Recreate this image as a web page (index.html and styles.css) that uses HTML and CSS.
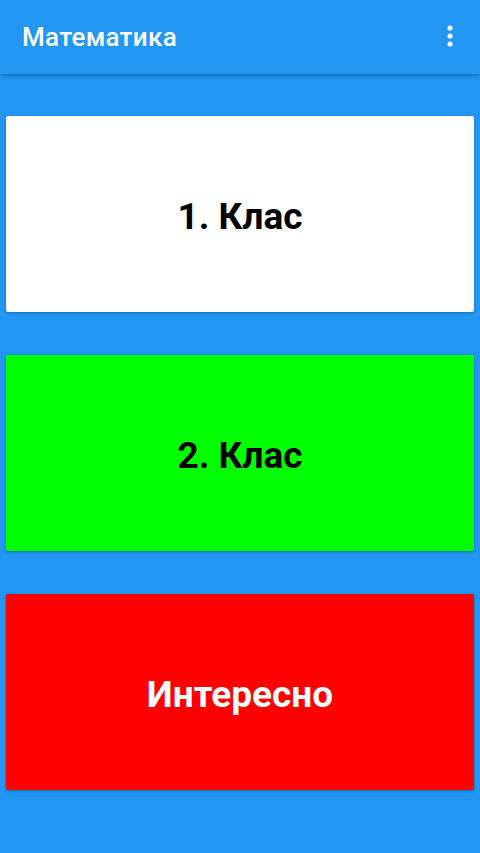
FILE: index.html
```html
<!DOCTYPE html>
<html lang="uk">
<head>
<meta charset="utf-8">
<title>Математика</title>
<link rel="stylesheet" href="styles.css">
</head>
<body>
<header class="toolbar">
  <h1 class="title">Математика</h1>
  <button class="menu" aria-label="Меню">
    <svg width="8" height="24" viewBox="0 0 8 24"><circle cx="4" cy="4" r="2.6" fill="#fff"/><circle cx="4" cy="12" r="2.6" fill="#fff"/><circle cx="4" cy="20" r="2.6" fill="#fff"/></svg>
  </button>
</header>
<main class="content">
  <div class="card card-white">1. Клас</div>
  <div class="card card-green">2. Клас</div>
  <div class="card card-red">Интересно</div>
</main>
</body>
</html>
```
FILE: styles.css
```css
* { box-sizing: border-box; }
html, body { margin: 0; padding: 0; }
body {
  width: 480px;
  height: 853px;
  background: #2196f3;
  font-family: Roboto, "Noto Sans", sans-serif;
  overflow: hidden;
}
.toolbar {
  height: 74px;
  display: flex;
  align-items: center;
  justify-content: space-between;
  padding: 0 26px 0 22px;
  background: #2196f3;
  box-shadow: 0 2px 4px rgba(0, 0, 0, 0.28);
  position: relative;
}
.title {
  margin: 0;
  color: #fff;
  font-size: 26px;
  font-weight: 500;
  letter-spacing: 0.3px;
  padding-bottom: 0;
}
.menu {
  background: none;
  border: 0;
  padding: 0;
  display: flex;
  margin-top: -2px;
}
.content {
  display: flex;
  flex-direction: column;
  gap: 43px;
  padding: 42px 6px 0;
}
.card {
  height: 196px;
  border-radius: 2px;
  display: flex;
  align-items: center;
  justify-content: center;
  font-size: 37px;
  font-weight: 700;
  padding-top: 4px;
  box-shadow: 0 1px 3px rgba(0, 0, 0, 0.3);
}
.card-white { background: #fff; color: #000; }
.card-green { background: #00ff00; color: #000; }
.card-red { background: #ff0000; color: #fff; }
```
